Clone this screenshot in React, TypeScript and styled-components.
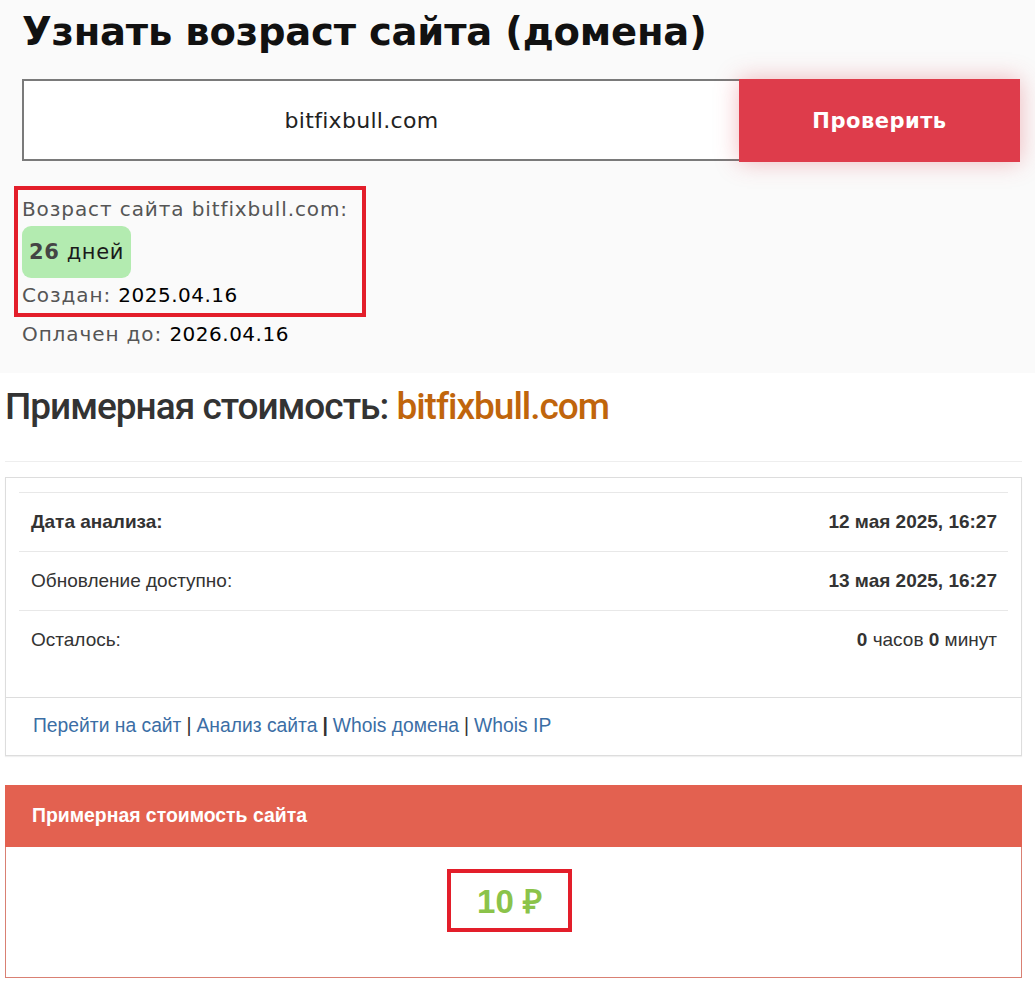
import styled, { createGlobalStyle } from "styled-components";

const GlobalStyle = createGlobalStyle`
  html, body {
    margin: 0;
    padding: 0;
    background: #ffffff;
  }
  * {
    box-sizing: border-box;
  }
`;

const TopSection = styled.section`
  background: #fafafa;
  padding: 4px 15px 24px 22px;
  font-family: "DejaVu Sans", "Open Sans", sans-serif;
`;

const Title = styled.h1`
  margin: 0;
  font-size: 38.5px;
  line-height: 56px;
  font-weight: 700;
  color: #111;
  letter-spacing: -0.2px;
`;

const Form = styled.div`
  display: flex;
  margin-top: 19px;
  width: 998px;
`;

const DomainInput = styled.input`
  flex: 1;
  height: 82px;
  border: 2px solid #7a7a7a;
  border-right: none;
  background: #fff;
  font-family: inherit;
  font-size: 22px;
  letter-spacing: 0.3px;
  color: #222;
  text-align: center;
  padding: 0 40px 0 0;
  outline: none;
`;

const CheckButton = styled.button`
  width: 281px;
  height: 83px;
  border: none;
  background: #de3c4b;
  color: #fff;
  font-family: inherit;
  font-size: 21px;
  font-weight: 700;
  letter-spacing: 0.5px;
  box-shadow: 0 0 22px rgba(222, 60, 75, 0.35);
  cursor: pointer;
`;

const Marked = styled.div<{ $pad?: string }>`
  display: inline-block;
  border: 4px solid #e31e2a;
  padding: ${(p) => p.$pad ?? "0"};
`;

const AgeBox = styled(Marked)`
  margin: 24px 0 0 -8px;
  width: 352px;
`;

const Line = styled.div`
  font-size: 20px;
  letter-spacing: 0.9px;
  line-height: 30px;
  color: #555;
`;

const Value = styled.span`
  color: #000;
  letter-spacing: 0.5px;
`;

const Badge = styled.div`
  display: inline-block;
  background: #b3ebb0;
  border-radius: 9px;
  padding: 0 7px;
  margin: 2px 0 2px;
  line-height: 52px;
  font-size: 21px;
  letter-spacing: 0.6px;
  color: #1a1a1a;
  b {
    color: #444;
  }
`;

const PaidLine = styled(Line)`
  margin-top: 2px;
`;

const Main = styled.main`
  padding: 0 13px 0 5px;
  font-family: "Liberation Sans", Arial, sans-serif;
  color: #333;
`;

const PriceHeading = styled.h2`
  margin: 14px 0 0;
  font-family: Roboto, "Liberation Sans", sans-serif;
  font-weight: 500;
  font-size: 37px;
  letter-spacing: -1px;
  line-height: 40px;
  color: #333;
  span {
    color: #c0650c;
  }
`;

const Rule = styled.hr`
  margin: 34px 0 15px;
  border: none;
  border-top: 1px solid #eee;
`;

const Panel = styled.div`
  border: 1px solid #ddd;
  background: #fff;
  box-shadow: 0 1px 1px rgba(0, 0, 0, 0.06);
`;

const PanelBody = styled.div`
  padding: 14px 13px 28px 13px;
`;

const InfoTable = styled.table`
  width: 100%;
  border-collapse: collapse;
  font-size: 19px;
  td {
    border-top: 1px solid #e8e8e8;
    height: 59px;
    padding: 0 11px 0 12px;
    vertical-align: middle;
  }
  tr:last-child td {
    height: 58px;
  }
  td:last-child {
    text-align: right;
  }
`;

const PanelFooter = styled.div`
  border-top: 1px solid #ddd;
  padding: 0 27px;
  height: 58px;
  display: flex;
  align-items: center;
  font-size: 19.3px;
  color: #333;
  a {
    color: #3b6ea5;
    text-decoration: none;
  }
`;

const Sep = styled.span`
  margin: 0 5px;
`;

const PricePanel = styled.div`
  margin-top: 29px;
  border: 1px solid #d98073;
`;

const PriceHeader = styled.div`
  background: #e36150;
  color: #fff;
  font-weight: 700;
  font-size: 19.4px;
  height: 62px;
  display: flex;
  align-items: center;
  padding: 0 27px;
  margin: -1px -1px 0;
`;

const PriceBody = styled.div`
  height: 130px;
  display: flex;
  align-items: center;
  justify-content: center;
  padding-right: 8px;
`;

const PriceBox = styled(Marked)`
  width: 125px;
  height: 63px;
  display: flex;
  align-items: center;
  justify-content: center;
  color: #8bc34a;
  font-weight: 700;
  font-size: 33px;
  margin-top: -22px;
`;

export default function App() {
  return (
    <>
      <GlobalStyle />
      <TopSection>
        <Title>Узнать возраст сайта (домена)</Title>
        <Form>
          <DomainInput defaultValue="bitfixbull.com" />
          <CheckButton>Проверить</CheckButton>
        </Form>
        <AgeBox $pad="4px 4px 3px 4px">
          <Line>Возраст сайта bitfixbull.com:</Line>
          <Badge>
            <b>26</b> дней
          </Badge>
          <Line>
            Создан: <Value>2025.04.16</Value>
          </Line>
        </AgeBox>
        <PaidLine>
          Оплачен до: <Value>2026.04.16</Value>
        </PaidLine>
      </TopSection>
      <Main>
        <PriceHeading>
          Примерная стоимость: <span>bitfixbull.com</span>
        </PriceHeading>
        <Rule />
        <Panel>
          <PanelBody>
            <InfoTable>
              <tbody>
                <tr>
                  <td>
                    <b>Дата анализа:</b>
                  </td>
                  <td>
                    <b>12 мая 2025, 16:27</b>
                  </td>
                </tr>
                <tr>
                  <td>Обновление доступно:</td>
                  <td>
                    <b>13 мая 2025, 16:27</b>
                  </td>
                </tr>
                <tr>
                  <td>Осталось:</td>
                  <td>
                    <b>0</b> часов <b>0</b> минут
                  </td>
                </tr>
              </tbody>
            </InfoTable>
          </PanelBody>
          <PanelFooter>
            <a href="#">Перейти на сайт</a>
            <Sep>|</Sep>
            <a href="#">Анализ сайта</a>
            <Sep>
              <b>|</b>
            </Sep>
            <a href="#">Whois домена</a>
            <Sep>|</Sep>
            <a href="#">Whois IP</a>
          </PanelFooter>
        </Panel>
        <PricePanel>
          <PriceHeader>Примерная стоимость сайта</PriceHeader>
          <PriceBody>
            <PriceBox>10 ₽</PriceBox>
          </PriceBody>
        </PricePanel>
      </Main>
    </>
  );
}
